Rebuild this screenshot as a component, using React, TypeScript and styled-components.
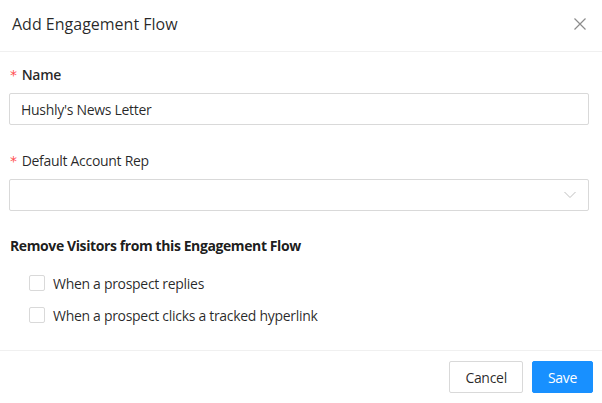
import styled, { createGlobalStyle } from 'styled-components';
import React, { useState } from 'react';

const GlobalStyle = createGlobalStyle`
  * { box-sizing: border-box; }
  body {
    margin: 0;
    background: #fff;
    font-family: 'Open Sans', 'Noto Sans', sans-serif;
    color: rgba(0, 0, 0, 0.85);
  }
`;

export default function App() {
  const [name, setName] = useState("Hushly's News Letter");
  const [checks, setChecks] = useState({ replies: false, clicks: false });

  return (
    <>
      <GlobalStyle />
      <Modal>
        <Header>
          <Title>Add Engagement Flow</Title>
          <CloseBtn aria-label="Close">
            <svg width="12" height="12" viewBox="0 0 12 12">
              <path d="M0.5 0.5 L11.5 11.5 M11.5 0.5 L0.5 11.5" stroke="#8c8c8c" strokeWidth="1.2" />
            </svg>
          </CloseBtn>
        </Header>
        <Body>
          <FormItem>
            <Label $weight={600}>
              <Star>*</Star>Name
            </Label>
            <Input value={name} onChange={(e) => setName(e.target.value)} />
          </FormItem>
          <FormItem>
            <Label $weight={500}>
              <Star>*</Star>Default Account Rep
            </Label>
            <Select>
              <svg width="12" height="8" viewBox="0 0 12 8">
                <path d="M0.5 1 L6 6.5 L11.5 1" stroke="#bfbfbf" strokeWidth="1" fill="none" />
              </svg>
            </Select>
          </FormItem>
          <SectionTitle>Remove Visitors from this Engagement Flow</SectionTitle>
          <CheckList>
            <CheckRow>
              <Box
                type="checkbox"
                checked={checks.replies}
                onChange={() => setChecks({ ...checks, replies: !checks.replies })}
              />
              When a prospect replies
            </CheckRow>
            <CheckRow>
              <Box
                type="checkbox"
                checked={checks.clicks}
                onChange={() => setChecks({ ...checks, clicks: !checks.clicks })}
              />
              When a prospect clicks a tracked hyperlink
            </CheckRow>
          </CheckList>
        </Body>
        <Footer>
          <Button>Cancel</Button>
          <Button $primary>Save</Button>
        </Footer>
      </Modal>
    </>
  );
}

const Modal = styled.div`
  width: 602px;
  height: 403px;
  display: flex;
  flex-direction: column;
  background: #fff;
`;

const Header = styled.div`
  display: flex;
  align-items: center;
  justify-content: space-between;
  height: 52px;
  padding: 0 16px 0 12px;
  border-bottom: 1px solid #f0f0f0;
`;

const Title = styled.div`
  font-size: 16px;
  line-height: 22px;
  color: rgba(0, 0, 0, 0.85);
  margin-top: -4px;
`;

const CloseBtn = styled.button`
  border: none;
  background: none;
  padding: 0;
  display: flex;
  margin-top: -4px;
  cursor: pointer;
`;

const Body = styled.div`
  flex: 1;
  padding: 11px 13px 0 9px;
  letter-spacing: -0.3px;
`;

const FormItem = styled.div`
  margin-bottom: 24px;
`;

const Label = styled.div<{ $weight: number }>`
  display: flex;
  align-items: center;
  height: 22px;
  margin-bottom: 8px;
  padding-left: 1px;
  font-size: 14px;
  font-weight: ${(p) => p.$weight};
  color: rgba(0, 0, 0, 0.85);
`;

const Star = styled.span`
  color: #ff4d4f;
  font-family: SimSun, 'DejaVu Sans', sans-serif;
  font-size: 14px;
  font-weight: 400;
  margin-right: 5px;
  margin-top: 2px;
`;

const Input = styled.input`
  display: block;
  width: 100%;
  height: 32px;
  padding: 4px 11px;
  border: 1px solid #d9d9d9;
  border-radius: 2px;
  font-family: inherit;
  font-size: 14px;
  letter-spacing: -0.3px;
  color: rgba(0, 0, 0, 0.85);
  outline: none;
`;

const Select = styled.div`
  display: flex;
  align-items: center;
  justify-content: flex-end;
  height: 32px;
  padding: 0 12px;
  border: 1px solid #d9d9d9;
  border-radius: 2px;
`;

const SectionTitle = styled.div`
  font-size: 14px;
  font-weight: 700;
  line-height: 22px;
  letter-spacing: -0.4px;
  color: rgba(0, 0, 0, 0.9);
  padding-left: 1px;
`;

const CheckList = styled.div`
  display: flex;
  flex-direction: column;
  gap: 10px;
  padding: 15px 0 0 20px;
`;

const CheckRow = styled.label`
  display: flex;
  align-items: center;
  gap: 8px;
  height: 22px;
  font-size: 14px;
  color: rgba(0, 0, 0, 0.85);
  cursor: pointer;
`;

const Box = styled.input`
  appearance: none;
  width: 16px;
  height: 16px;
  margin: 0;
  border: 1px solid #d9d9d9;
  border-radius: 2px;
  background: #fff;

  &:checked {
    background: #1890ff;
    border-color: #1890ff;
  }
`;

const Footer = styled.div`
  display: flex;
  justify-content: flex-end;
  gap: 9px;
  padding: 10px 9px 10px;
  border-top: 1px solid #f0f0f0;
`;

const Button = styled.button<{ $primary?: boolean }>`
  height: 32px;
  padding: 4px 15px;
  border-radius: 2px;
  font-family: inherit;
  font-size: 14px;
  letter-spacing: -0.3px;
  border: 1px solid ${(p) => (p.$primary ? '#1890ff' : '#d9d9d9')};
  background: ${(p) => (p.$primary ? '#1890ff' : '#fff')};
  color: ${(p) => (p.$primary ? '#fff' : 'rgba(0, 0, 0, 0.85)')};
  cursor: pointer;
`;
